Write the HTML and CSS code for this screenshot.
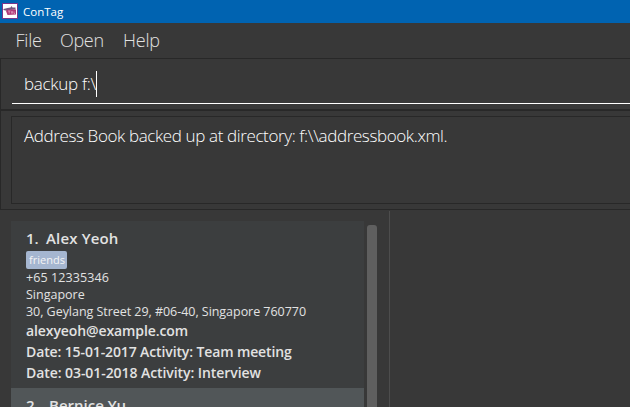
FILE: index.html
```
<!DOCTYPE html>
<html lang="en">
<head>
<meta charset="utf-8">
<title>ConTag</title>
<link rel="stylesheet" href="styles.css">
</head>
<body>
<header class="titlebar">
  <svg class="logo" width="16" height="16" viewBox="0 0 16 16">
    <rect x=".5" y=".5" width="15" height="15" fill="#fff" stroke="#78358a"/>
    <path d="M1.500 6l4-1 3-.5 1-1.500 1 1.500h3v2l-6 .5-2 1-2-.5-2-.5z" fill="#75577f"/>
    <path d="M4 8l1.500-1.500h8.500v5l-8.500.5z" fill="#b03a78"/>
    <path d="M6 8h2.500M7.200 8v2.500M9.500 10.500v-2h1v2M12 8.500v2h1" fill="none" stroke="#e3a3c3" stroke-width=".7"/>
  </svg>
  <span class="app-name">ConTag</span>
</header>
<nav class="menu"><span class="m-file">File</span><span class="m-open">Open</span><span class="m-help">Help</span></nav>
<section class="command"><div class="field"><span class="typed">backup f:\</span><i class="caret"></i></div></section>
<section class="result"><div class="result-box"><span class="message">Address Book backed up at directory: f:\\addressbook.xml.</span></div></section>
<main class="content">
  <div class="list">
    <article class="card">
      <div class="name"><span class="num">1.</span><span class="person">Alex Yeoh</span></div>
      <div class="tags"><span class="tag">friends</span></div>
      <div class="small"><span class="phone">+65 12335346</span></div>
      <div class="small"><span class="city">Singapore</span></div>
      <div class="small street"><span class="address">30, Geylang Street 29, #06-40, Singapore 760770</span></div>
      <div class="big"><span class="email">alexyeoh@example.com</span></div>
      <div class="big"><span class="event">Date: 15-01-2017 Activity: Team meeting</span></div>
      <div class="big"><span class="event last">Date: 03-01-2018 Activity: Interview</span></div>
    </article>
    <article class="card alt">
      <div class="name"><span class="num second">2.</span><span class="person second">Bernice Yu</span></div>
    </article>
  </div>
  <div class="scrollbar"></div>
  <div class="detail"></div>
</main>
</body>
</html>
```
FILE: styles.css
```
* { box-sizing: border-box; }
body {
  margin: 0;
  width: 630px;
  height: 407px;
  overflow: hidden;
  display: flex;
  flex-direction: column;
  background: #383838;
  color: #e2e2e2;
  font-family: "Open Sans", "Noto Sans", sans-serif;
  white-space: nowrap;
}
.titlebar {
  flex: none;
  height: 23px;
  background: #0063b1;
  display: flex;
  align-items: center;
  padding: 0 0 1px 2px;
  gap: 5px;
  color: #fff;
  font-size: 11.5px;
}
.menu {
  flex: none;
  height: 35px;
  display: flex;
  line-height: 35px;
  padding-left: 15.5px;
  font-size: 18px;
  font-weight: 300;
}
.m-file { width: 44.5px; letter-spacing: -.2px; }
.m-open { width: 63px; letter-spacing: -.3px; }
.m-help { letter-spacing: -.2px; }
.command {
  flex: none;
  height: 52px;
  border: solid #282828;
  border-width: 1px 0 1px 1px;
  padding-left: 11px;
}
.field {
  height: 45px;
  border-bottom: 1px solid #fff;
  padding-left: 12px;
  display: flex;
  align-items: center;
  padding-top: 5px;
  font-size: 17px;
  font-weight: 300;
  color: #fff;
}
.typed { letter-spacing: -.3px; margin-top: -1px; }
.caret { width: 1px; height: 26px; background: #fff; }
.result {
  flex: none;
  height: 100px;
  border: solid #282828;
  border-width: 1px 0 1px 1px;
  padding: 5px 0 5px 10px;
}
.result-box {
  height: 88px;
  border: solid #282828;
  border-width: 1px 0 1px 1px;
  padding: 7px 0 0 12px;
  font-size: 17px;
  line-height: 24px;
  font-weight: 300;
  color: #fff;
}
.message { letter-spacing: -.38px; }
.content { flex: 1; min-height: 0; display: flex; }
.list { width: 353px; margin: 11px 3px 0 11px; overflow: hidden; }
.card { height: 167px; background: #3c3e3f; padding: 6px 0 0 15px; }
.card.alt { background: #515658; }
.name { height: 24px; line-height: 22px; font-size: 15px; font-weight: 600; display: flex; }
.num { width: 20px; }
.num.second { width: 23px; }
.person { letter-spacing: .15px; }
.person.second { letter-spacing: 0; }
.tags { height: 18px; }
.tag {
  display: block;
  width: 41px;
  height: 18px;
  border-radius: 2px;
  background: #a5b6d0;
  color: #f4f4f4;
  font-size: 11px;
  line-height: 17px;
  padding-left: 3px;
}
.small { height: 17.3px; line-height: 17px; font-size: 12.500px; }
.small.street { line-height: 16.5px; }
.phone { letter-spacing: .1px; }
.address { letter-spacing: -.04px; }
.big { height: 21px; line-height: 19px; font-size: 14px; font-weight: 600; }
.email { letter-spacing: -.1px; }
.event { letter-spacing: -.12px; }
.event.last { letter-spacing: -.07px; }
.scrollbar { width: 10px; margin-top: 15px; background: #5f5f5f; border-radius: 3px 3px 0 0; }
.detail { flex: 1; margin: 1px 0 0 12px; border-left: 1px solid #4d4d4d; }
```
